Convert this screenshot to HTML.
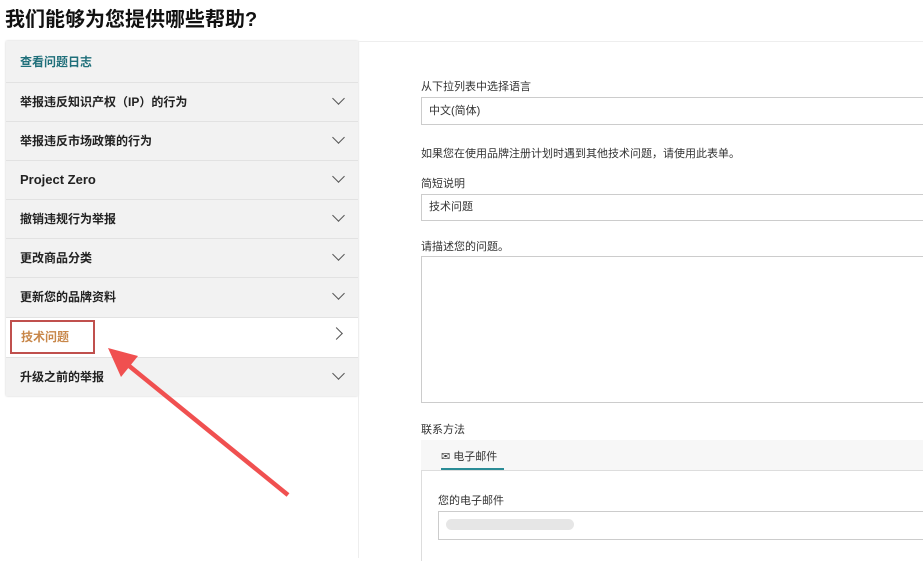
<!DOCTYPE html>
<html><head><meta charset="utf-8"><style>
body{margin:0;width:923px;height:557px;background:#fff;font-family:"Liberation Sans","Noto Sans CJK SC",sans-serif;position:relative;overflow:hidden;color:#222}
.a{position:absolute}
h1{position:absolute;left:5px;top:3px;margin:0;font-size:20px;font-weight:bold;color:#111}
.left{position:absolute;left:6px;top:41px;width:352px;height:355px;background:#f2f2f2;box-shadow:0 0 2px #ccc}
.row{position:absolute;left:0;width:352px;height:39px;border-top:1px solid #e2e2e2;font-size:12px;font-weight:bold;box-sizing:border-box;padding-left:14px;line-height:38px;color:#222}
.chev{position:absolute;right:15px;top:11px;width:8px;height:8px;border-right:1.6px solid #555;border-bottom:1.6px solid #555;transform:rotate(45deg)}
.lbl{position:absolute;left:421px;font-size:11px;color:#333}
.box{position:absolute;border:1px solid #ccc;background:#fff;box-sizing:border-box;font-size:11px;color:#333;padding-left:7px}
</style></head><body>
<h1>我们能够为您提供哪些帮助?</h1>
<div class="left">
 <div class="row" style="top:0;height:41px;border-top:none;line-height:42px;color:#1f6f7a;font-weight:bold">查看问题日志</div>
 <div class="row" style="top:41px">举报违反知识产权（IP）的行为<div class="chev"></div></div>
 <div class="row" style="top:80px">举报违反市场政策的行为<div class="chev"></div></div>
 <div class="row" style="top:119px;font-size:13px">Project Zero<div class="chev"></div></div>
 <div class="row" style="top:158px">撤销违规行为举报<div class="chev"></div></div>
 <div class="row" style="top:197px">更改商品分类<div class="chev"></div></div>
 <div class="row" style="top:236px">更新您的品牌资料<div class="chev"></div></div>
 <div class="row" style="top:276px;background:#fff;height:40px;color:#c8874a"><div class="chev" style="transform:rotate(-45deg);top:11px;right:17px"></div></div>
 <div class="row" style="top:316px">升级之前的举报<div class="chev"></div></div>
</div>
<div class="a" style="left:10px;top:320px;width:85px;height:34px;border:2px solid #c0504d;box-sizing:border-box;font-size:12px;font-weight:bold;color:#c8874a;padding-left:9px;line-height:31px">技术问题</div>
<div class="a" style="left:358px;top:41px;width:565px;height:516px;border-left:1px solid #eee;border-top:1px solid #eee"></div>
<div class="lbl" style="top:78px">从下拉列表中选择语言</div>
<div class="box" style="left:421px;top:97px;width:510px;height:28px;line-height:26px">中文(简体)</div>
<div class="lbl" style="top:145px">如果您在使用品牌注册计划时遇到其他技术问题，请使用此表单。</div>
<div class="lbl" style="top:175px">简短说明</div>
<div class="box" style="left:421px;top:194px;width:510px;height:27px;line-height:25px">技术问题</div>
<div class="lbl" style="top:238px">请描述您的问题。</div>
<div class="box" style="left:421px;top:256px;width:510px;height:147px"></div>
<div class="lbl" style="top:421px">联系方法</div>
<div class="a" style="left:421px;top:440px;width:502px;height:30px;background:#f7f7f7;border-bottom:1px solid #ddd"></div>
<div class="a" style="left:441px;top:448px;font-size:11px;color:#333">✉ 电子邮件</div>
<div class="a" style="left:441px;top:468px;width:63px;height:2px;background:#2a8c96"></div>
<div class="a" style="left:421px;top:471px;width:510px;height:90px;border-left:1px solid #ddd"></div>
<div class="lbl" style="left:438px;top:492px">您的电子邮件</div>
<div class="box" style="left:438px;top:511px;width:490px;height:29px"></div>
<div class="a" style="left:446px;top:519px;width:128px;height:11px;border-radius:6px;background:#e6e6e6"></div>
<svg class="a" style="left:0;top:0" width="923" height="557"><line x1="288" y1="495" x2="128" y2="365" stroke="#f05050" stroke-width="4.5"/><polygon points="108,348 138,356 121,377" fill="#f05050"/></svg>
</body></html>
